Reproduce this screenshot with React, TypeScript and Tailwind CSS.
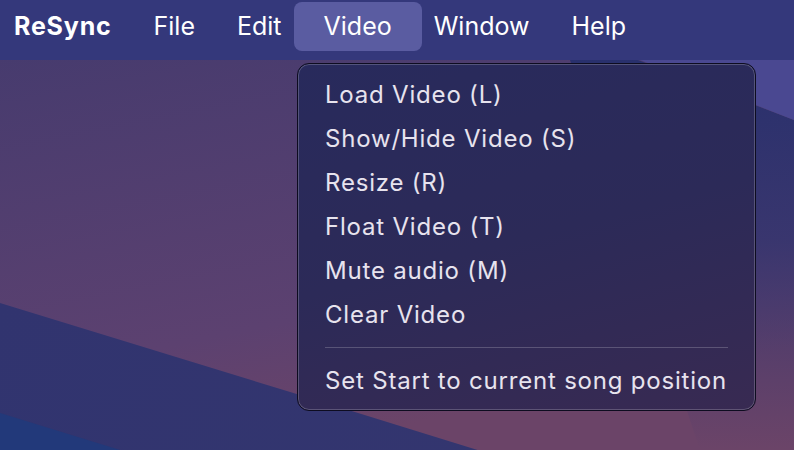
import React from "react";

const menuItems = [
  "Load Video (L)",
  "Show/Hide Video (S)",
  "Resize (R)",
  "Float Video (T)",
  "Mute audio (M)",
  "Clear Video",
];

const Wallpaper = () => (
  <svg
    className="absolute inset-0"
    width="794"
    height="450"
    viewBox="0 0 794 450"
  >
    <defs>
      <linearGradient id="base" x1="0" y1="0" x2="0.35" y2="1">
        <stop offset="0" stopColor="#433a6e" />
        <stop offset="0.75" stopColor="#5c4170" />
        <stop offset="1" stopColor="#6b4468" />
      </linearGradient>
      <linearGradient id="band" x1="0" y1="0" x2="1" y2="0.3">
        <stop offset="0" stopColor="#31346f" />
        <stop offset="1" stopColor="#34366f" />
      </linearGradient>
      <linearGradient id="right" x1="0" y1="0" x2="0" y2="1">
        <stop offset="0" stopColor="#262f6c" stopOpacity="1" />
        <stop offset="0.5" stopColor="#30336e" stopOpacity="0.8" />
        <stop offset="1" stopColor="#3a3670" stopOpacity="0" />
      </linearGradient>
    </defs>
    <rect width="794" height="450" fill="url(#base)" />
    <polygon points="0,303 300,395 794,548 794,450 0,450" fill="url(#band)" />
    <polygon points="0,413 120,450 0,450" fill="#22397a" />
    <polygon points="560,30 794,120 794,450 700,450" fill="url(#right)" />
    <polygon points="640,60 794,60 794,120" fill="#4a4891" />
  </svg>
);

export default function App() {
  return (
    <div
      className="relative w-[794px] h-[450px] overflow-hidden"
      style={{ fontFamily: "Inter, 'Noto Sans', sans-serif" }}
    >
      <Wallpaper />

      <div className="relative flex items-start pt-[2px] h-[60px] bg-[#34387b] text-white text-[25px]">
        <div className="h-[49px] flex items-center pl-[14px] pr-[21px] font-bold tracking-[0.8px]">
          ReSync
        </div>
        <div className="h-[49px] flex items-center px-[21px]">File</div>
        <div className="h-[49px] flex items-center px-[21px]">Edit</div>
        <div className="-mx-[9px] px-[30px] h-[49px] flex items-center rounded-[8px] bg-[#5a5ca1]">
          Video
        </div>
        <div className="h-[49px] flex items-center px-[21px]">Window</div>
        <div className="h-[49px] flex items-center px-[21px]">Help</div>
      </div>

      <div className="absolute left-[297px] top-[63px] w-[459px] h-[348px] rounded-[12px] border border-[#0d0c20] shadow-[inset_0_0_0_1px_rgba(255,255,255,0.2)] bg-[linear-gradient(165deg,#282a5c_0%,#2c2a58_50%,#382a52_100%)] pt-[9px] px-[27px] text-[24px] tracking-[0.8px] text-[#e7e3ee]">
        {menuItems.map((item) => (
          <div key={item} className="h-[44px] flex items-center">
            {item}
          </div>
        ))}
        <div className="h-[1px] bg-white/20 mt-[10px] mb-[11px]" />
        <div className="h-[44px] flex items-center">
          Set Start to current song position
        </div>
      </div>
    </div>
  );
}
